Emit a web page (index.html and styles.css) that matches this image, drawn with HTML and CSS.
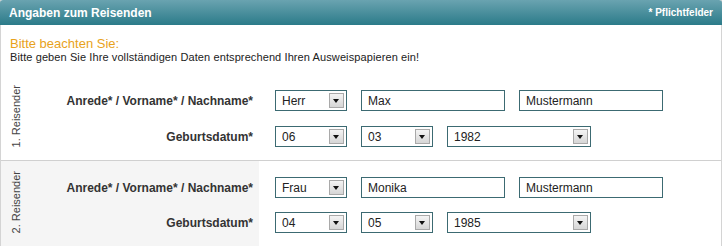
FILE: index.html
```html
<!DOCTYPE html>
<html lang="de">
	<head>
		<meta charset="utf-8">
		<title>Angaben zum Reisenden</title>
		<link rel="stylesheet" href="styles.css">
	</head>
	<body>
		<div class="box">
			<div class="box-head">
				<h2>Angaben zum Reisenden</h2>
				<span class="required">* Pflichtfelder</span>
			</div>
			<div class="notice">
				<h3>Bitte beachten Sie:</h3>
				<p>Bitte geben Sie Ihre vollständigen Daten entsprechend Ihren Ausweispapieren ein!</p>
			</div>

			<div class="traveller">
				<div class="tag"><span>1. Reisender</span></div>
				<label class="caption top">Anrede* / Vorname* / Nachname*</label>
				<div class="fields top">
					<span class="pick small"><select><option>Herr</option><option>Frau</option></select><span class="arrow"></span></span>
					<input type="text" value="Max">
					<input type="text" value="Mustermann">
				</div>
				<label class="caption bottom">Geburtsdatum*</label>
				<div class="fields bottom">
					<span class="pick small"><select><option>06</option></select><span class="arrow"></span></span>
					<span class="pick small"><select><option>03</option></select><span class="arrow"></span></span>
					<span class="pick wide"><select><option>1982</option></select><span class="arrow"></span></span>
				</div>
			</div>

			<div class="traveller alt">
				<div class="tag"><span>2. Reisender</span></div>
				<label class="caption top">Anrede* / Vorname* / Nachname*</label>
				<div class="fields top">
					<span class="pick small"><select><option>Frau</option><option>Herr</option></select><span class="arrow"></span></span>
					<input type="text" value="Monika">
					<input type="text" value="Mustermann">
				</div>
				<label class="caption bottom">Geburtsdatum*</label>
				<div class="fields bottom">
					<span class="pick small"><select><option>04</option></select><span class="arrow"></span></span>
					<span class="pick small"><select><option>05</option></select><span class="arrow"></span></span>
					<span class="pick wide"><select><option>1985</option></select><span class="arrow"></span></span>
				</div>
			</div>
		</div>
	</body>
</html>
```

FILE: styles.css
```css
body {
	margin: 0;
	font-family: "Liberation Sans", Arial, sans-serif;
	color: #222;
	background: #fff;
}
.box {
	width: 722px;
	box-sizing: border-box;
	border-left: 1px solid #d4d4d4;
	border-right: 1px solid #d4d4d4;
}
.box-head {
	height: 25px;
	display: flex;
	align-items: center;
	justify-content: space-between;
	padding: 0 9px;
	margin: 0 -1px;
	background: linear-gradient(#6aa3b0, #2b7b89);
	border-top-left-radius: 3px;
	border-top-right-radius: 3px;
	color: #fff;
}
.box-head h2 {
	margin: 0;
	font-size: 12px;
	font-weight: bold;
}
.required {
	font-size: 10px;
	font-weight: bold;
}
.notice {
	padding: 11px 9px 10px;
}
.notice h3 {
	margin: 0;
	font-size: 13px;
	font-weight: normal;
	line-height: 15px;
	color: #e8a21c;
}
.notice p {
	margin: 0;
	font-size: 11px;
	line-height: 13px;
	letter-spacing: 0.1px;
}
.traveller {
	display: grid;
	grid-template-columns: 30px 228px 1fr;
}
.traveller.alt {
	border-top: 1px solid #d0d0d0;
}
.traveller.alt .tag,
.traveller.alt .caption {
	background: #f5f5f5;
}
.tag {
	grid-row: 1 / 3;
	display: flex;
	align-items: flex-end;
	justify-content: center;
	padding-bottom: 13px;
}
.tag span {
	writing-mode: vertical-rl;
	transform: rotate(180deg);
	font-size: 11px;
	color: #444;
}
.top {
	padding-top: 16px;
}
.bottom {
	padding-top: 15px;
	padding-bottom: 13px;
}
.alt .bottom {
	padding-top: 14px;
}
.caption {
	display: flex;
	align-items: center;
	justify-content: flex-end;
	padding-right: 6px;
	font-size: 12px;
	font-weight: bold;
	color: #333;
}
.fields {
	display: flex;
	align-items: center;
	gap: 14px;
	padding-left: 16px;
}
input[type=text],
select {
	height: 21px;
	box-sizing: border-box;
	border: 1px solid #3c6a72;
	border-radius: 0;
	background: #fff;
	font-family: inherit;
	font-size: 12px;
	color: #222;
	padding: 0 6px;
	margin: 0;
}
input[type=text] {
	width: 144px;
}
select {
	appearance: none;
	-webkit-appearance: none;
	width: 100%;
	outline: none;
}
.pick {
	position: relative;
	display: block;
}
.pick.small {
	width: 72px;
}
.pick.wide {
	width: 144px;
}
.arrow {
	position: absolute;
	top: 3px;
	right: 3px;
	width: 15px;
	height: 15px;
	box-sizing: border-box;
	border: 1px solid #a9a9a9;
	background: linear-gradient(#f4f4f4, #d6d6d6);
	pointer-events: none;
}
.arrow::after {
	content: "";
	position: absolute;
	left: 3px;
	top: 5px;
	border-left: 3.5px solid transparent;
	border-right: 3.5px solid transparent;
	border-top: 4px solid #111;
}
```
